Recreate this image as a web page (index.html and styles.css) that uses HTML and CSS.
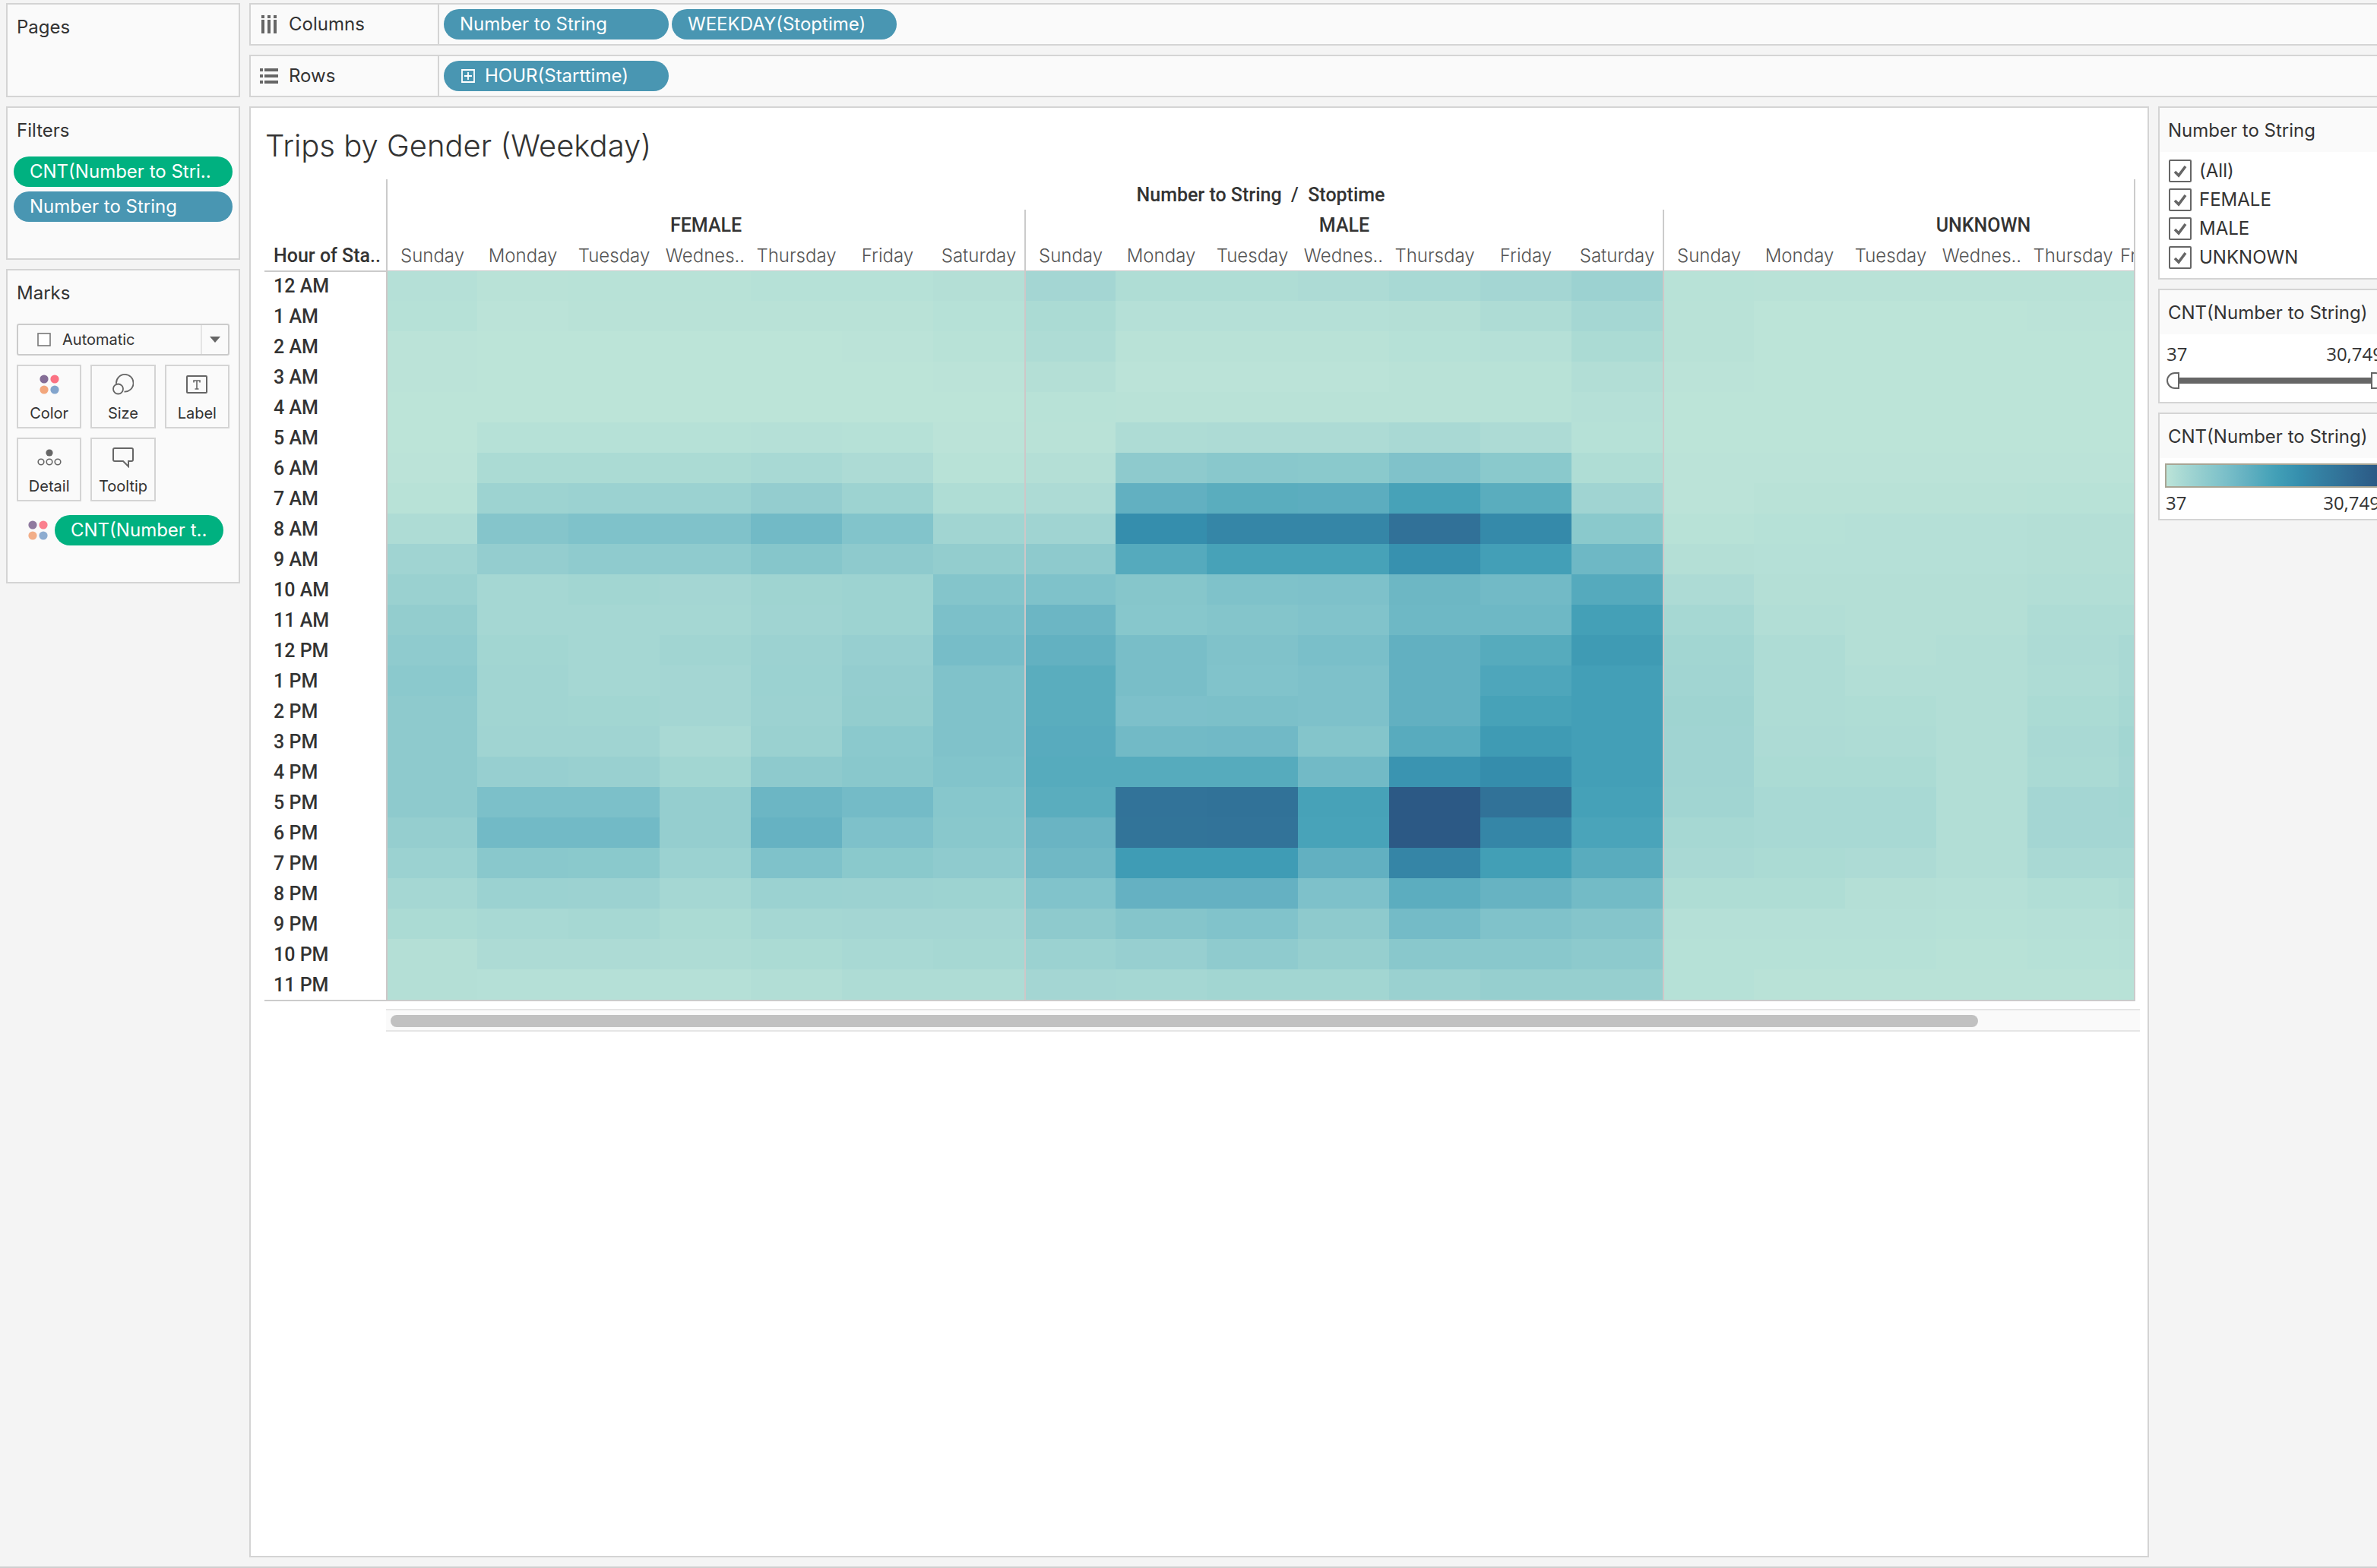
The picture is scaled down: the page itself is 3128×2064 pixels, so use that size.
FILE: index.html
```html
<!DOCTYPE html>
<html lang="en">
<head>
<meta charset="utf-8">
<title>Trips by Gender (Weekday)</title>
<link rel="stylesheet" href="styles.css">
</head>
<body>
<svg class="defs" aria-hidden="true">
  <symbol id="dots" viewBox="0 0 26 26">
    <circle cx="6" cy="6" r="5.6" fill="#846d96"/><circle cx="20" cy="6" r="5.6" fill="#fb7283"/>
    <circle cx="6" cy="20" r="5.6" fill="#f2a67c"/><circle cx="20" cy="20" r="5.6" fill="#82a4cc"/>
  </symbol>
</svg>
<main class="workspace">
  <aside class="side">
    <section class="panel pages"><h2>Pages</h2></section>
    <section class="panel filters">
      <h2>Filters</h2>
      <div class="pill-stack">
        <button class="pill measure">CNT(Number to Stri..</button>
        <button class="pill">Number to String</button>
      </div>
    </section>
    <section class="panel marks">
      <h2>Marks</h2>
      <label class="mark-type">
        <svg width="18" height="18" viewBox="0 0 18 18" aria-hidden="true"><rect x="1" y="1" width="16" height="16" fill="#fff" stroke="#777" stroke-width="1.6"/></svg>
        <select aria-label="Mark type"><option>Automatic</option></select>
        <span class="arrow"><svg width="14" height="8" viewBox="0 0 14 8" aria-hidden="true"><path d="M0 0h14L7 8z" fill="#666"/></svg></span>
      </label>
      <div class="mark-grid">
        <button class="mark"><svg width="26" height="26"><use href="#dots"/></svg><span>Color</span></button>
        <button class="mark"><svg width="28" height="28" viewBox="0 0 28 28" fill="none" stroke="#666" stroke-width="1.8"><path d="M5 13A11.3 11.3 0 1 1 15.500 23.500"/><circle cx="7.500" cy="20" r="6.500"/></svg><span>Size</span></button>
        <button class="mark"><svg width="28" height="26" viewBox="0 0 28 26" fill="none" stroke="#666"><rect x="1" y="2" width="26" height="22" rx="1" stroke-width="2"/><path d="M10 10.500V8h8v2.500M14 8v11M11.500 19h5" stroke-width="1.6"/></svg><span>Label</span></button>
        <button class="mark"><svg width="32" height="22" viewBox="0 0 32 22" fill="none" stroke="#666" stroke-width="1.6"><circle cx="16" cy="5" r="4.600" fill="#666" stroke="none"/><circle cx="5" cy="17" r="3.800"/><circle cx="16" cy="17" r="3.800"/><circle cx="27" cy="17" r="3.800"/></svg><span>Detail</span></button>
        <button class="mark"><svg width="28" height="28" viewBox="0 0 28 28" fill="none" stroke="#666" stroke-width="2"><path d="M3 2h22a2 2 0 0 1 2 2v13a2 2 0 0 1-2 2h-4v7l-7-7H3a2 2 0 0 1-2-2V4a2 2 0 0 1 2-2z"/></svg><span>Tooltip</span></button>
      </div>
      <div class="encoding">
        <svg width="26" height="26"><use href="#dots"/></svg>
        <button class="pill measure">CNT(Number t..</button>
      </div>
    </section>
  </aside>

  <div class="content">
    <div class="shelf">
      <div class="shelf-name"><svg width="24" height="24" viewBox="0 0 24 24" fill="#666"><path d="M2 0h4v4H2zM10 0h4v4h-4zM18 0h4v4h-4zM2 6h4v18H2zM10 6h4v18h-4zM18 6h4v18h-4z"/></svg>Columns</div>
      <div class="shelf-pills"><button class="pill">Number to String</button><button class="pill">WEEKDAY(Stoptime)</button></div>
    </div>
    <div class="shelf">
      <div class="shelf-name"><svg width="24" height="24" viewBox="0 0 24 24" fill="#666"><path d="M0 2h4v4H0zM0 10h4v4H0zM0 18h4v4H0zM6 2h18v4H6zM6 10h18v4H6zM6 18h18v4H6z"/></svg>Rows</div>
      <div class="shelf-pills"><button class="pill"><svg width="18" height="18" viewBox="0 0 18 18" fill="none" stroke="#fff" stroke-width="1.800"><path d="M1 1h16v16H1zM9 4v10M4 9h10"/></svg>HOUR(Starttime)</button></div>
    </div>
    <div class="lower">
      <article class="viz">
        <h1>Trips by Gender (Weekday)</h1>
        <div class="sheet">
          <table class="heat">
            <colgroup id="cols"></colgroup>
            <thead>
              <tr>
                <th class="corner" rowspan="2"></th>
                <th class="fields" colspan="20">Number to String&nbsp; /&nbsp; Stoptime</th>
              </tr>
              <tr>
                <th colspan="7" class="group">FEMALE</th>
                <th colspan="7" class="group">MALE</th>
                <th colspan="6" class="group"><span class="week">UNKNOWN</span></th>
              </tr>
              <tr id="days"><th class="hour" scope="col">Hour of Sta..</th></tr>
            </thead>
            <tbody id="hours"></tbody>
          </table>
          <div class="scroll" role="scrollbar" aria-label="Scroll columns" aria-controls="hours" aria-valuenow="0"><div class="thumb"></div></div>
        </div>
      </article>
      <aside class="legends">
        <section class="card">
          <h2>Number to String</h2>
          <div class="checks">
            <label><input type="checkbox" checked>(All)</label>
            <label><input type="checkbox" checked>FEMALE</label>
            <label><input type="checkbox" checked>MALE</label>
            <label><input type="checkbox" checked>UNKNOWN</label>
          </div>
        </section>
        <section class="card">
          <h2>CNT(Number to String)</h2>
          <div class="ends"><span>37</span><span>30,749</span></div>
          <div class="slider">
            <input class="low" type="range" min="37" max="30749" value="37" aria-label="Minimum count">
            <input class="high" type="range" min="37" max="30749" value="30749" aria-label="Maximum count">
          </div>
        </section>
        <section class="card">
          <h2>CNT(Number to String)</h2>
          <div class="ramp"></div>
          <div class="ends legend"><span>37</span><span>30,749</span></div>
        </section>
      </aside>
    </div>
  </div>
</main>
<footer class="tabs"></footer>
<script src="script.js"></script>
</body>
</html>
```
FILE: styles.css
```css
* { box-sizing: border-box; }
body {
  margin: 0;
  min-height: 100vh;
  display: flex;
  flex-direction: column;
  background: #f4f4f4;
  color: #333;
  font-family: Inter, "Liberation Sans", sans-serif;
  font-size: 24px;
  line-height: 32px;
  overflow-x: hidden;
}
h1, h2 { margin: 0; font-weight: 400; }
h2 { font-size: 24px; line-height: 32px; }
button, select, input { font: inherit; color: inherit; margin: 0; }
svg { flex: none; display: block; }
.defs { position: absolute; width: 0; height: 0; }

.workspace { flex: 1; display: flex; gap: 12px; padding: 4px 0 12px 8px; }
.side { flex: none; width: 308px; display: flex; flex-direction: column; gap: 12px; }
.panel { background: #fafafa; border: 2px solid #d4d4d4; padding-top: 14px; }
.panel h2 { padding-left: 12px; }
.pages { height: 124px; }
.filters { min-height: 202px; }
.marks { min-height: 414px; }

.pill {
  display: flex;
  align-items: center;
  gap: 13px;
  width: 296px;
  height: 40px;
  padding: 0 0 0 21px;
  border: 0;
  border-radius: 20px;
  background: #4996b2;
  color: #fff;
  text-align: left;
  white-space: nowrap;
}
.pill svg { margin-left: 2px; }
.pill.measure { background: #00b180; }
.pill-stack { display: grid; gap: 6px; padding: 18px 8px 0; }
.pill-stack .pill { width: 100%; }

.mark-type {
  display: flex;
  align-items: center;
  height: 42px;
  margin: 24px 12px 12px;
  padding-left: 25px;
  border: 2px solid #cbcbcb;
  border-radius: 3px;
  font-size: 20px;
}
.mark-type select {
  flex: 1;
  align-self: stretch;
  padding: 0 0 0 15px;
  border: 0;
  background: none;
  appearance: none;
}
.arrow { display: grid; place-items: center; width: 36px; align-self: stretch; border-left: 2px solid #e4e4e4; }
.mark-grid { display: grid; grid-template-columns: repeat(3, 1fr); gap: 12px; margin: 0 12px; }
.mark {
  display: grid;
  grid-template-rows: 48px 28px;
  place-items: center;
  height: 84px;
  padding: 0 0 4px;
  border: 2px solid #d4d4d4;
  background: #fafafa;
  font-size: 20px;
  line-height: 24px;
}
.encoding { display: flex; align-items: center; gap: 9px; padding: 18px 12px 0 27px; }
.encoding svg { opacity: .9; }
.encoding .pill { width: 222px; }

.content { flex: 1; min-width: 0; display: flex; flex-direction: column; gap: 12px; }
.shelf { display: flex; height: 56px; background: #fafafa; border: 2px solid #d4d4d4; border-right: 0; }
.shelf-name { display: flex; align-items: center; gap: 14px; width: 248px; padding-left: 12px; border-right: 2px solid #d4d4d4; }
.shelf-pills { display: flex; align-items: center; gap: 4px; padding-left: 6px; }

.lower { flex: 1; display: flex; gap: 12px; }
.viz { flex: 1; min-width: 0; background: #fff; border: 2px solid #d4d4d4; padding-top: 26px; }
.viz h1 { padding-left: 19px; font-size: 40px; line-height: 48px; font-weight: 300; }
.sheet { margin: 20px 10px 0 18px; }

.heat { width: calc(100% - 6px); table-layout: fixed; border-collapse: separate; border-spacing: 0; border-right: 2px solid #cbcbcb; }
.heat col { width: 120px; }
.heat .c-head { width: 160px; }
.heat .c-rest { width: auto; }
.heat th, .heat td { height: 40px; padding: 2px 0 0; overflow: hidden; white-space: nowrap; line-height: 32px; }
.heat thead th { border-left: 2px solid #cbcbcb; }
.heat th { font-family: Roboto, "Liberation Sans", sans-serif; font-size: 25px; font-weight: 500; }
.heat .corner, .heat .hour, .heat tbody th { border-left: 0; }
.heat .hour, .heat tbody th { padding-left: 12px; text-align: left; }
.heat thead .day { border-left: 0; font-family: Inter, "Liberation Sans", sans-serif; font-size: 24px; font-weight: 300; color: #555; }
.heat thead .first { border-left: 2px solid #cbcbcb; }
.heat thead .cut { padding-left: 2px; text-align: left; }
.heat td.first { border-left: 2px solid #cdc8c8; }
.heat tbody tr:first-child td { box-shadow: inset 0 1px #c8c8c8; }
.heat tbody tr:first-child th { box-shadow: inset 0 2px #cbcbcb; }
.heat tbody tr:last-child > * { height: 42px; border-bottom: 2px solid #cbcbcb; }
.week { display: block; width: 840px; }

.scroll { margin: 10px 0 0 160px; height: 30px; padding: 6px; background: #fafafa; border: solid #e6e6e6; border-width: 2px 0; }
.thumb { width: 91%; height: 16px; border-radius: 8px; background: #c1c1c1; }

.legends { flex: none; width: 288px; overflow: hidden; display: flex; flex-direction: column; gap: 12px; }
.card { width: 300px; background: #fff; border: 2px solid #d4d4d4; }
.card h2 { height: 58px; padding: 14px 0 0 11px; background: #fafafa; }
.checks { display: grid; gap: 8px; padding: 10px 12px 12px; }
.checks label { display: flex; align-items: center; gap: 10px; height: 30px; }
.checks input {
  appearance: none;
  width: 30px;
  height: 30px;
  border: 2px solid #666;
  border-radius: 2px;
  background: url("data:image/svg+xml,%3Csvg xmlns='http://www.w3.org/2000/svg' viewBox='0 0 26 26'%3E%3Cpath d='M6 14l5 5L20 7' fill='none' stroke='%23666' stroke-width='3.600'/%3E%3C/svg%3E") center / 26px 26px no-repeat;
}
.ends { display: flex; justify-content: space-between; padding: 10px 2px 8px 9px; font-family: "Open Sans", "Noto Sans", sans-serif; }
.slider { display: grid; margin: 0 1px 17px 9px; background: linear-gradient(#666, #666) center / calc(100% - 32px) 8px no-repeat; }
.slider input { grid-area: 1 / 1; appearance: none; width: 100%; height: 22px; background: none; pointer-events: none; }
.slider input::-webkit-slider-thumb {
  appearance: none;
  width: 17px;
  height: 22px;
  border: 2px solid #666;
  border-radius: 11px 0 0 11px;
  background: #fff;
  pointer-events: auto;
}
.slider .high::-webkit-slider-thumb { border-radius: 0 11px 11px 0; }
.ramp {
  height: 32px;
  margin: 7px 6px 0 7px;
  border: 2px solid #a8a594;
  background: linear-gradient(90deg, #bce4d8, #aedcd5, #a1d5d2, #95cecf, #89c8cc, #7ec1ca, #72bac6, #66b2c2, #59acbe, #4ba5ba, #419eb6, #3b96b2, #358ead, #3586a7, #347ea1, #32779b, #316f96, #2f6790, #2d608a, #2c5985);
}
.ends.legend { padding: 4px 6px 5px 8px; }

.tabs { height: 2px; background: #cfcfcf; }
```
FILE: script.js
```js
// Sequential blue-teal palette; cell values are positions on it, times ten.
const palette = ["bce4d8","aedcd5","a1d5d2","95cecf","89c8cc","7ec1ca","72bac6","66b2c2","59acbe","4ba5ba","419eb6","3b96b2","358ead","3586a7","347ea1","32779b","316f96","2f6790","2d608a","2c5985"]
  .map(h => [0, 2, 4].map(i => parseInt(h.slice(i, i + 2), 16)));

function shade(v) {
  const p = v / 10, i = Math.min(Math.floor(p), palette.length - 2), t = p - i;
  return `rgb(${palette[i].map((c, k) => Math.round(c + (palette[i + 1][k] - c) * t)).join(",")})`;
}

const weekdays = ["Sunday", "Monday", "Tuesday", "Wednes..", "Thursday", "Friday", "Saturday"];
const counts = [
  "5 2 3 3 4 4 6  18 9 9 11 15 18 24  3 2 2 2 2 2",
  "4 1 2 2 2 2 4  12 5 5 5 6 10 17  2 0 0 0 1 1",
  "1 0 0 0 0 1 3  10 2 2 2 4 5 12  2 0 0 0 0 0",
  "1 0 0 0 0 0 1  6 1 1 1 2 3 7  1 0 0 0 0 0",
  "0 0 0 0 0 0 0  3 2 2 2 2 3 5  0 0 0 0 0 0",
  "0 4 4 4 5 4 1  2 10 11 11 14 11 4  0 0 0 0 0 0",
  "1 12 12 12 15 11 3  6 36 40 39 48 39 9  1 1 1 1 1 1",
  "3 23 25 25 31 23 9  11 73 79 78 94 79 21  1 2 2 2 3 3",
  "10 44 49 48 60 46 20  21 120 130 130 157 125 39  3 4 5 5 6 6",
  "21 31 35 35 43 36 32  36 83 94 94 116 98 63  6 5 5 5 6 6",
  "26 17 19 18 22 23 45  49 43 49 50 64 60 83  11 6 6 6 7 7",
  "32 17 17 17 21 23 52  65 42 45 47 63 63 97  16 7 6 6 10 10",
  "35 19 17 20 24 28 56  72 54 48 53 73 82 104  19 10 6 7 11 14",
  "38 20 17 18 25 31 48  79 54 47 50 73 88 98  20 10 7 7 10 14",
  "36 20 19 18 24 32 48  79 51 52 50 73 94 98  22 10 9 7 12 16",
  "36 21 21 14 26 38 48  81 60 61 45 81 104 98  21 11 10 7 14 19",
  "36 28 27 19 36 40 46  82 82 82 60 112 121 98  21 12 12 7 13 18",
  "36 52 52 30 65 58 42  79 155 156 94 190 156 96  20 15 15 7 18 19",
  "30 60 60 30 70 50 40  67 154 155 93 190 130 91  16 15 15 7 18 18",
  "25 40 39 25 49 39 35  62 103 103 73 131 99 80  14 12 11 7 14 14",
  "17 25 24 17 25 24 23  47 71 71 50 78 69 59  9 9 6 5 8 10",
  "12 15 16 12 17 18 18  36 44 47 36 58 48 44  5 5 5 4 5 6",
  "6 11 11 10 12 15 16  25 28 35 29 40 40 37  4 4 4 3 4 5",
  "6 5 5 5 7 10 10  18 17 19 19 26 29 29  4 2 2 2 2 3"
].map(r => r.split(/\s+/).map(Number));

const last = counts[0].length - 1;
document.getElementById("cols").innerHTML =
  '<col class="c-head">' + "<col>".repeat(last) + '<col class="c-rest">';

const first = i => (i % 7 === 0 ? " first" : "");
document.getElementById("days").insertAdjacentHTML("beforeend",
  counts[0].map((_, i) => `<th scope="col" class="day${first(i)}${i === last ? " cut" : ""}">${weekdays[i % 7]}</th>`).join(""));

document.getElementById("hours").innerHTML = counts.map((row, h) =>
  `<tr><th scope="row">${h % 12 || 12} ${h < 12 ? "AM" : "PM"}</th>` +
  row.map((v, i) => `<td class="${first(i).trim()}" style="background-color:${shade(v)}"></td>`).join("") + "</tr>").join("");
```
